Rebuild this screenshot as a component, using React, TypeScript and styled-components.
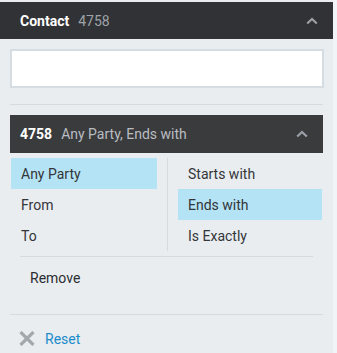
import React from "react";
import styled, { createGlobalStyle } from "styled-components";

const Global = createGlobalStyle`
  html, body { margin: 0; padding: 0; }
  body { font-family: Roboto, "Liberation Sans", Arial, sans-serif; background: #e9edf0; }
`;

const Page = styled.div`
  display: flex;
  width: 337px;
  height: 353px;
  overflow: hidden;
`;

const Panel = styled.div`
  width: 333px;
  flex-shrink: 0;
  background: #e9edf0;
  padding-top: 2px;
`;

const Rail = styled.div`
  width: 4px;
  background: #f1f4f6;
`;

const Header = styled.div<{ $inset?: boolean }>`
  height: ${(p) => (p.$inset ? 38 : 37)}px;
  background: ${(p) => (p.$inset ? "#3a3b3d" : "#313235")};
  display: flex;
  align-items: center;
  padding: 0 15px 0 ${(p) => (p.$inset ? 10 : 20)}px;
  font-size: 14px;
`;

const Title = styled.span`
  color: #ffffff;
  font-weight: 700;
  margin-right: 9px;
`;

const Sub = styled.span<{ $light?: boolean }>`
  color: ${(p) => (p.$light ? "#b9bdc1" : "#9ea3a8")};
  flex: 1;
`;

const Body = styled.div`
  padding: 10px 10px 0;
`;

const Input = styled.div`
  height: 35px;
  background: #ffffff;
  border: 2px solid #d6dde2;
  margin-right: -1px;
`;

const Rule = styled.div<{ $top: number; $inset?: number }>`
  height: 1px;
  background: #d5dbe0;
  margin: ${(p) => p.$top}px ${(p) => p.$inset ?? 0}px 0;
`;

const FilterHeader = styled(Header)`
  margin-top: 10px;
`;

const Options = styled.div`
  margin-top: 5px;
  padding-left: 1px;
  display: grid;
  grid-template-columns: 146px 1px 144px;
  column-gap: 10px;
`;

const Column = styled.div`
  display: flex;
  flex-direction: column;
`;

const Divider = styled.div`
  background: #d5dbe0;
  width: 1px;
`;

const Option = styled.div<{ $active?: boolean }>`
  height: 31px;
  display: flex;
  align-items: center;
  padding-left: 10px;
  font-size: 14px;
  color: #333538;
  background: ${(p) => (p.$active ? "#b5e3f6" : "transparent")};
`;

const RemoveRow = styled.div`
  height: 42px;
  display: flex;
  align-items: center;
  padding-left: 20px;
  font-size: 14px;
  color: #2c2e31;
`;

const ResetRow = styled.div`
  height: 47px;
  display: flex;
  align-items: center;
  padding-left: 9px;
  gap: 10px;
  font-size: 14px;
  color: #1b8bcb;
`;

const Chevron = () => (
  <svg width="12" height="8" viewBox="0 0 12 8">
    <path d="M1.2 6.5 L6 2 L10.8 6.5" fill="none" stroke="#9aa0a6" strokeWidth="2.2" />
  </svg>
);

const XIcon = () => (
  <svg width="16" height="15" viewBox="0 0 16 15">
    <path d="M1.5 1 L14.5 14 M14.5 1 L1.5 14" stroke="#a3a8ac" strokeWidth="3.2" />
  </svg>
);

export default function App() {
  return (
    <>
      <Global />
      <Page>
        <Panel>
          <Header>
            <Title>Contact</Title>
            <Sub>4758</Sub>
            <Chevron />
          </Header>
          <Body>
            <Input />
            <Rule $top={16} />
            <FilterHeader $inset>
              <Title>4758</Title>
              <Sub $light>Any Party, Ends with</Sub>
              <Chevron />
            </FilterHeader>
            <Options>
              <Column>
                <Option $active>Any Party</Option>
                <Option>From</Option>
                <Option>To</Option>
              </Column>
              <Divider />
              <Column>
                <Option>Starts with</Option>
                <Option $active>Ends with</Option>
                <Option>Is Exactly</Option>
              </Column>
            </Options>
            <Rule $top={5} $inset={10} />
            <RemoveRow>Remove</RemoveRow>
            <Rule $top={15} />
            <ResetRow>
              <XIcon />
              Reset
            </ResetRow>
          </Body>
        </Panel>
        <Rail />
      </Page>
    </>
  );
}
